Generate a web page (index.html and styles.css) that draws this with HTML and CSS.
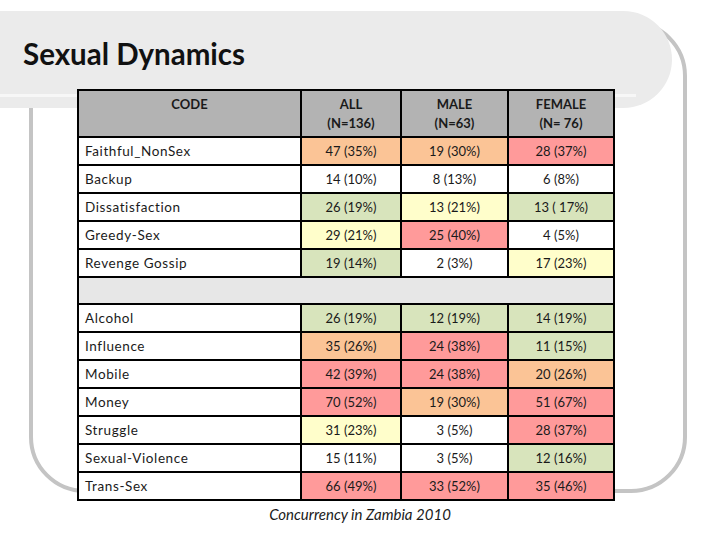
FILE: index.html
```html
<!DOCTYPE html>
<html>
<head>
<meta charset="utf-8">
<link rel="stylesheet" href="styles.css">
</head>
<body>
<div class="slide">
  <div class="frame"></div>
  <div class="banner"><div class="banner-line"></div></div>
  <h1 class="title">Sexual Dynamics</h1>
  <table class="grid">
    <colgroup>
      <col class="c-code"><col class="c-all"><col class="c-male"><col class="c-female">
    </colgroup>
    <thead>
      <tr>
        <th>CODE</th>
        <th>ALL<br>(N=136)</th>
        <th>MALE<br>(N=63)</th>
        <th>FEMALE<br>(N= 76)</th>
      </tr>
    </thead>
    <tbody>
      <tr><td class="code">Faithful_NonSex</td><td class="or">47 (35%)</td><td class="or">19 (30%)</td><td class="rd">28 (37%)</td></tr>
      <tr><td class="code">Backup</td><td>14 (10%)</td><td>8 (13%)</td><td>6 (8%)</td></tr>
      <tr><td class="code">Dissatisfaction</td><td class="gr">26 (19%)</td><td class="ye">13 (21%)</td><td class="gr">13 ( 17%)</td></tr>
      <tr><td class="code">Greedy-Sex</td><td class="ye">29 (21%)</td><td class="rd">25 (40%)</td><td>4 (5%)</td></tr>
      <tr><td class="code">Revenge Gossip</td><td class="gr">19 (14%)</td><td>2 (3%)</td><td class="ye">17 (23%)</td></tr>
      <tr class="spacer"><td colspan="4"></td></tr>
      <tr><td class="code">Alcohol</td><td class="gr">26 (19%)</td><td class="gr">12 (19%)</td><td class="gr">14 (19%)</td></tr>
      <tr><td class="code">Influence</td><td class="or">35 (26%)</td><td class="rd">24 (38%)</td><td class="gr">11 (15%)</td></tr>
      <tr><td class="code">Mobile</td><td class="rd">42 (39%)</td><td class="rd">24 (38%)</td><td class="or">20 (26%)</td></tr>
      <tr><td class="code">Money</td><td class="rd">70 (52%)</td><td class="or">19 (30%)</td><td class="rd">51 (67%)</td></tr>
      <tr><td class="code">Struggle</td><td class="ye">31 (23%)</td><td>3 (5%)</td><td class="rd">28 (37%)</td></tr>
      <tr><td class="code">Sexual-Violence</td><td>15 (11%)</td><td>3 (5%)</td><td class="gr">12 (16%)</td></tr>
      <tr><td class="code">Trans-Sex</td><td class="rd">66 (49%)</td><td class="rd">33 (52%)</td><td class="rd">35 (46%)</td></tr>
    </tbody>
  </table>
  <p class="caption">Concurrency in Zambia 2010</p>
</div>
</body>
</html>
```
FILE: styles.css
```css
html, body {
  margin: 0;
  padding: 0;
  background: #ffffff;
}

.slide {
  position: relative;
  width: 720px;
  height: 540px;
  overflow: hidden;
  background: #ffffff;
  font-family: Lato, "Open Sans", sans-serif;
  color: #1a1a1a;
}

.frame {
  position: absolute;
  left: 29px;
  top: 20px;
  width: 650px;
  height: 465px;
  border: 4px solid #c4c4c4;
  border-radius: 56px;
}

.banner {
  position: absolute;
  left: -60px;
  top: 11px;
  width: 732px;
  height: 97px;
  background: #ebebeb;
  border-radius: 0 50px 50px 0;
}

.banner-line {
  position: absolute;
  left: 0;
  top: 83px;
  width: 696px;
  height: 3px;
  background: #f7f7f7;
}

.title {
  position: relative;
  margin: 0;
  padding: 37px 0 0 23px;
  height: 52px;
  font-size: 29.5px;
  line-height: 34px;
  font-weight: 700;
  color: #111111;
}

.grid {
  position: relative;
  margin-left: 77px;
  border-collapse: collapse;
  table-layout: fixed;
  width: 538px;
  font-size: 13px;
}

.c-code { width: 223px; }
.c-all { width: 100px; }
.c-male { width: 107px; }
.c-female { width: 106px; }

.grid th, .grid td {
  border: 2px solid #000000;
  padding: 0;
}

.grid th {
  background: #b3b3b3;
  height: 41px;
  vertical-align: top;
  padding-top: 4px;
  font-weight: 700;
  line-height: 19px;
  text-align: center;
  color: #1a1a1a;
}

.grid td {
  height: 26px;
  text-align: center;
  vertical-align: middle;
  background: #ffffff;
  font-size: 13px;
}

.grid td.code {
  text-align: left;
  padding-left: 6px;
  font-size: 13.5px;
  letter-spacing: 0.6px;
}

.grid .spacer td {
  background: #e7e7e7;
  height: 25px;
}

.grid td.or { background: #fbc496; }
.grid td.rd { background: #ff9a9a; }
.grid td.gr { background: #d8e4bc; }
.grid td.ye { background: #fffecb; }

.caption {
  margin: 4px 0 0 0;
  text-align: center;
  font-style: italic;
  font-size: 15px;
  color: #1a1a1a;
}
```
